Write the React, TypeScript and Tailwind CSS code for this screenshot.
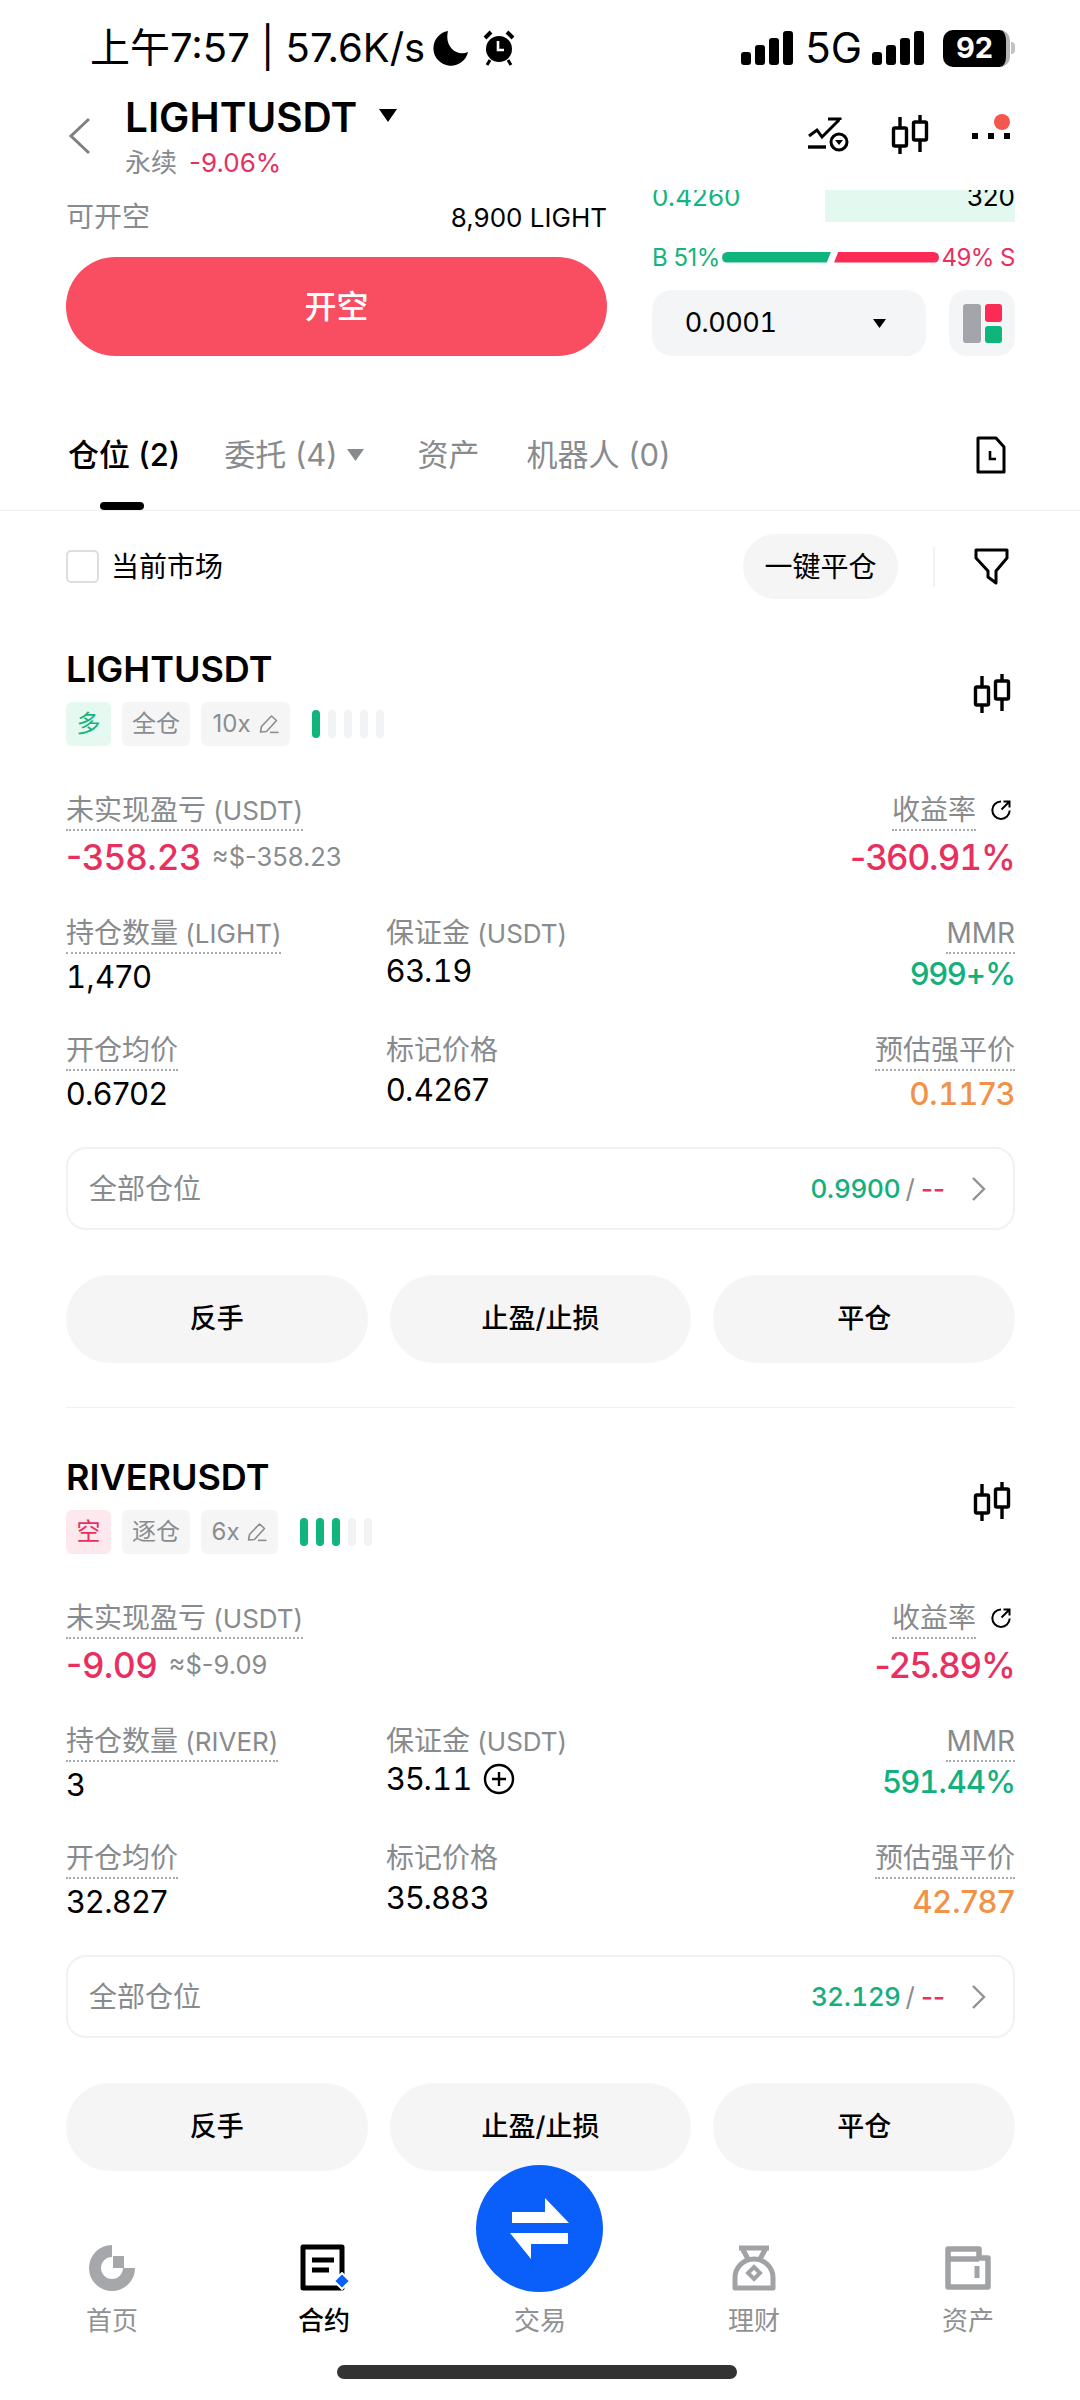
import type { ReactNode } from 'react';

const FONT = '[font-family:Inter,"Noto_Sans_CJK_SC",sans-serif]';

// Inter's proportional 1 is much narrower than the one in the app, the rest of the digits line up
function Num({ v }: { v: string }) {
  return (
    <>
      {v.split(/(1)/).map((part, i) =>
        part === '1' ? (
          <span key={i} className="tabular-nums">
            1
          </span>
        ) : (
          part
        ),
      )}
    </>
  );
}

function SignalBars() {
  return (
    <div className="flex items-end gap-[4px] h-[34px]">
      <div className="w-[10px] h-[13px] rounded-[3px] bg-black" />
      <div className="w-[10px] h-[20px] rounded-[3px] bg-black" />
      <div className="w-[10px] h-[27px] rounded-[3px] bg-black" />
      <div className="w-[10px] h-[34px] rounded-[3px] bg-black" />
    </div>
  );
}

function CandleIcon() {
  return (
    <svg width="38" height="42" viewBox="0 0 38 42" fill="none" stroke="#000" strokeWidth="3.4">
      <path d="M9 3V40M29 1V38" />
      <rect x="2.5" y="14" width="13" height="18" rx="1.5" fill="#fff" />
      <rect x="22.5" y="8" width="13" height="18" rx="1.5" fill="#fff" />
    </svg>
  );
}

function PencilIcon() {
  return (
    <svg width="20" height="20" viewBox="0 0 20 20" fill="none" stroke="#8a8d90" strokeWidth="1.6">
      <path d="M1.5 18L2.5 12.5L12.5 2L17.5 6.5L7.5 17.5L1.5 18Z" strokeLinejoin="round" />
      <path d="M11 18.4H19.5" />
    </svg>
  );
}

function RefreshIcon() {
  return (
    <svg width="22" height="22" viewBox="0 0 22 22" fill="none" stroke="#000" strokeWidth="2">
      <path d="M11 2.5A8.7 8.7 0 1 0 19.7 11.5" />
      <path d="M11.5 10.5L19.5 2.5M13.5 2.5H19.5V8.5" />
    </svg>
  );
}

function PlusCircle() {
  return (
    <svg width="32" height="32" viewBox="0 0 32 32" fill="none" stroke="#000" strokeWidth="2.4">
      <circle cx="16" cy="16" r="14" />
      <path d="M16 9V23M9 16H23" />
    </svg>
  );
}

function Tag({ children, className }: { children: ReactNode; className: string }) {
  return (
    <div className={`h-[44px] rounded-[6px] flex items-center justify-center gap-[8px] text-[24px] ${className}`}>
      {children}
    </div>
  );
}

function Label({ text, unit, dotted = true }: { text: string; unit?: string; dotted?: boolean }) {
  return (
    <div className="h-[38px]">
      <span
        className={`inline-block h-[38px] leading-[34px] text-[28px] text-[#888b8e] ${
          dotted ? 'border-b-2 border-dotted border-[#a8abad]' : ''
        }`}
      >
        {text}
        {unit && <span className="text-[26px]"> {unit}</span>}
      </span>
    </div>
  );
}

interface PositionProps {
  symbol: string;
  side: string;
  long: boolean;
  margin: string;
  leverage: string;
  tagW: string;
  level: number;
  pnl: string;
  pnlUsd: string;
  roe: string;
  base: string;
  qty: string;
  marginVal: string;
  addMargin?: boolean;
  mmr: string;
  entry: string;
  mark: string;
  liq: string;
  tp: string;
}

function Position(p: PositionProps) {
  return (
    <div>
      <div className="flex justify-between items-center">
        <div>
          <div className="h-[40px] leading-[40px] text-[36px] font-semibold text-black">{p.symbol}</div>
          <div className="mt-[13px] flex items-center">
            <Tag className={`w-[45px] ${p.long ? 'bg-[#e5f9f1] text-[#14b47e]' : 'bg-[#fde8ee] text-[#e8305f]'}`}>
              {p.side}
            </Tag>
            <Tag className="ml-[11px] w-[68px] bg-[#f5f5f5] text-[#8a8d90]">{p.margin}</Tag>
            <Tag className={`ml-[11px] ${p.tagW} bg-[#f5f5f5] text-[#8a8d90]`}>
              {p.leverage}
              <PencilIcon />
            </Tag>
            <div className="ml-[22px] flex gap-[8px]">
              {[0, 1, 2, 3, 4].map((i) => (
                <div
                  key={i}
                  className={`w-[8px] h-[28px] rounded-full ${i < p.level ? 'bg-[#0fb57b]' : 'bg-[#f2f3f4]'}`}
                />
              ))}
            </div>
          </div>
        </div>
        <div className="mb-[8px] mr-[4px]">
          <CandleIcon />
        </div>
      </div>

      <div className="mt-[47px] h-[123px] flex justify-between">
        <div>
          <Label text="未实现盈亏" unit="(USDT)" />
          <div className="mt-[6px] flex items-center leading-[40px]">
            <span className="text-[35px] font-medium text-[#e8305f]">{p.pnl}</span>
            <span className="ml-[11px] text-[25.5px] text-[#888b8e]">{p.pnlUsd}</span>
          </div>
        </div>
        <div className="flex flex-col items-end">
          <div className="flex">
            <Label text="收益率" />
            <div className="ml-[14px] mr-[3px] mt-[6px]">
              <RefreshIcon />
            </div>
          </div>
          <div className="mt-[6px] leading-[40px] text-[35px] font-medium tracking-[-0.8px] text-[#e8305f]">
            <Num v={p.roe} />
          </div>
        </div>
      </div>

      <div className="h-[117px] grid grid-cols-[320px_1fr_auto]">
        <div>
          <Label text="持仓数量" unit={`(${p.base})`} />
          <div className="mt-[3px] leading-[40px] text-[31px] text-black">
            <Num v={p.qty} />
          </div>
        </div>
        <div>
          <Label text="保证金" unit="(USDT)" dotted={false} />
          <div className="-mt-[3px] flex items-center gap-[11px] leading-[40px] text-[31px] text-black">
            <span>
              <Num v={p.marginVal} />
            </span>
            {p.addMargin && <PlusCircle />}
          </div>
        </div>
        <div className="flex flex-col items-end">
          <Label text="MMR" />
          <div className="leading-[40px] text-[31px] font-medium tracking-[-1px] text-[#12b07c]">
            <Num v={p.mmr} />
          </div>
        </div>
      </div>

      <div className="h-[114px] grid grid-cols-[320px_1fr_auto]">
        <div>
          <Label text="开仓均价" />
          <div className="mt-[3px] leading-[40px] text-[31px] text-black">{p.entry}</div>
        </div>
        <div>
          <Label text="标记价格" dotted={false} />
          <div className="-mt-[1px] leading-[40px] text-[31px] text-black">{p.mark}</div>
        </div>
        <div className="flex flex-col items-end">
          <Label text="预估强平价" />
          <div className="mt-[3px] leading-[40px] text-[31px] font-medium text-[#f0924a]">
            <Num v={p.liq} />
          </div>
        </div>
      </div>

      <div className="h-[83px] pl-[21px] pr-[22px] flex items-center justify-between rounded-[20px] border-2 border-[#f1f1f1]">
        <span className="mt-[1px] text-[28px] text-[#888b8e]">全部仓位</span>
        <div className="flex items-center text-[26px]">
          <span className="font-medium text-[#12b07c]">
            <Num v={p.tp} />
          </span>
          <span className="ml-[5px] text-[#888b8e]">/</span>
          <span className="ml-[6px] font-medium text-[#e8305f]">--</span>
          <svg className="ml-[26px] mr-[4px]" width="16" height="26" viewBox="0 0 16 26" fill="none" stroke="#8f9193" strokeWidth="2.4">
            <path d="M2 2L13 13L2 24" />
          </svg>
        </div>
      </div>

      <div className="mt-[45px] flex gap-[22px]">
        {['反手', '止盈/止损', '平仓'].map((t) => (
          <div
            key={t}
            className="flex-1 h-[88px] rounded-full bg-[#f5f5f5] flex items-center justify-center text-[27px] font-medium text-black"
          >
            {t}
          </div>
        ))}
      </div>
    </div>
  );
}

const NAV_X: Record<string, number> = { 首页: 112, 合约: 324, 交易: 540, 理财: 754, 资产: 968 };

function NavItem({ icon, label, active }: { icon: ReactNode; label: string; active?: boolean }) {
  return (
    <div className="absolute top-[73px] flex flex-col items-center w-[120px] -translate-x-1/2" style={{ left: NAV_X[label] }}>
      <div className="h-[48px] flex items-center justify-center">{icon}</div>
      <div className={`mt-[12px] text-[26px] leading-[34px] ${active ? 'text-black font-medium' : 'text-[#8f9194]'}`}>
        {label}
      </div>
    </div>
  );
}

export default function App() {
  return (
    <div className={`w-[1080px] h-[2400px] overflow-hidden bg-white ${FONT}`}>
      {/* Status bar */}
      <div className="h-[90px] pl-[90px] pr-[65px] pt-[24px] flex justify-between items-start text-black">
        <div className="flex items-center h-[48px]">
          <span className="text-[40px]">上午7:57 | 57.6K/s</span>
          <svg className="ml-[8px]" width="36" height="36" viewBox="0 0 36 36" fill="#000">
            <path d="M15 1A17.5 17.5 0 1 0 35 22C24 27 11 17 15 1Z" />
          </svg>
          <svg className="ml-[14px]" width="32" height="36" viewBox="0 0 32 36" fill="none">
            <circle cx="16" cy="19" r="13" fill="#000" />
            <path d="M15 11V20H21" stroke="#fff" strokeWidth="2.6" />
            <path d="M2 8L8 2M30 8L24 2" stroke="#000" strokeWidth="4" />
            <path d="M7 30L4 35M25 30L28 35" stroke="#000" strokeWidth="3" />
          </svg>
        </div>
        <div className="flex items-center h-[48px]">
          <SignalBars />
          <span className="ml-[12px] text-[42px] leading-none">5G</span>
          <div className="ml-[10px]">
            <SignalBars />
          </div>
          <div className="ml-[19px] flex items-center">
            <div className="w-[67px] h-[37px] rounded-[10px] bg-black border-r-[4px] border-[#b5b5b5] flex items-center justify-center text-[29px] font-bold text-white">
              92
            </div>
            <div className="ml-[1px] w-[4px] h-[12px] rounded-r-full bg-[#c2c2c2]" />
          </div>
        </div>
      </div>

      {/* Header */}
      <div className="h-[100px] pl-[68px] pr-[65px] flex justify-between">
        <div className="flex">
          <svg className="mt-[27px]" width="24" height="38" viewBox="0 0 24 38" fill="none" stroke="#7e8083" strokeWidth="3">
            <path d="M21 2L3 19L21 36" />
          </svg>
          <div className="ml-[33px] pt-[8px]">
            <div className="flex items-center h-[40px]">
              <span className="text-[40.5px] font-semibold leading-[40px]">LIGHTUSDT</span>
              <svg className="ml-[22px] mb-[6px]" width="18" height="13" viewBox="0 0 18 13" fill="#000">
                <path d="M0 0H18L9 13Z" />
              </svg>
            </div>
            <div className="mt-[8px] h-[34px] leading-[34px] text-[26px]">
              <span className="text-[#888b8e]">永续</span>
              <span className="ml-[12px] text-[#e8305f]">-9.06%</span>
            </div>
          </div>
        </div>
        <div className="relative flex items-start pt-[26px] pr-[5px]">
          <svg width="42" height="36" viewBox="0 0 42 36" fill="none" stroke="#000" strokeWidth="3">
            <path d="M1 20L9 14L14 21L31 4M20 3H32V4" />
            <path d="M0 31H18" strokeWidth="3.4" />
            <circle cx="31" cy="26" r="8" />
            <path d="M27 24H35L31 29Z" fill="#000" stroke="none" />
          </svg>
          <div className="ml-[41px] -mt-[2px]">
            <CandleIcon />
          </div>
          <div className="ml-[43px] mt-[17px] w-[38px] flex justify-between">
            <div className="w-[6px] h-[6px] bg-black" />
            <div className="w-[6px] h-[6px] bg-black" />
            <div className="w-[6px] h-[6px] bg-black" />
          </div>
          <div className="absolute top-[24px] right-[5px] w-[16px] h-[16px] rounded-full bg-[#f4574e]" />
        </div>
      </div>

      {/* Order panel, cut off at the top by the header */}
      <div className="h-[166px] pl-[66px] pr-[65px] flex justify-between">
        <div className="w-[541px]">
          <div className="h-[67px] pb-[13px] flex justify-between items-center">
            <span className="text-[28px] text-[#888b8e]">可开空</span>
            <span className="text-[26px] text-black">8,900 LIGHT</span>
          </div>
          <div className="h-[99px] rounded-full bg-[#f94d62] flex items-center justify-center text-[32px] font-medium text-white">
            开空
          </div>
        </div>
        <div className="w-[363px]">
          <div className="h-[32px] overflow-hidden flex justify-between">
            <span className="-mt-[10px] leading-[34px] text-[26px] text-[#14b47e]">0.4260</span>
            <div className="w-[190px] bg-[#e3f9f0] text-right">
              <div className="-mt-[10px] leading-[34px] text-[26px] text-black">320</div>
            </div>
          </div>
          <div className="mt-[21px] h-[30px] flex items-center justify-between text-[24px] tracking-[-0.5px] whitespace-nowrap">
            <span className="text-[#14b47e]">B 51%</span>
            <div className="flex items-center gap-[3px] -mt-[2px]">
              <div className="w-[109px] h-[11px] rounded-l-full bg-[#0fb57b] [clip-path:polygon(0_0,100%_0,96%_100%,0_100%)]" />
              <div className="w-[105px] h-[11px] rounded-r-full bg-[#fb2b56] [clip-path:polygon(4%_0,100%_0,100%_100%,0_100%)]" />
            </div>
            <span className="text-[#e8305f]">49% S</span>
          </div>
          <div className="mt-[17px] flex justify-between">
            <div className="w-[274px] h-[66px] rounded-[20px] bg-[#f4f5f6] pl-[33px] pr-[40px] flex items-center justify-between">
              <span className="text-[27px] text-black">
                <Num v="0.0001" />
              </span>
              <svg width="13" height="9" viewBox="0 0 13 9" fill="#000">
                <path d="M0 0H13L6.5 9Z" />
              </svg>
            </div>
            <div className="w-[66px] h-[66px] rounded-[18px] bg-[#f4f5f6] flex items-center justify-center gap-[4px]">
              <div className="w-[18px] h-[39px] rounded-[3px] bg-[#a3a5aa]" />
              <div className="flex flex-col gap-[4px]">
                <div className="w-[17px] h-[18px] rounded-[3px] bg-[#fb2b56]" />
                <div className="w-[17px] h-[17px] rounded-[3px] bg-[#0fb57b]" />
              </div>
            </div>
          </div>
        </div>
      </div>

      {/* Tabs */}
      <div className="relative mt-[44px] h-[111px] pl-[68px] pr-[74px] flex items-center justify-between border-b border-[#f0f0f0]">
        <div className="flex items-center text-[31px] text-[#888b8e]">
          <span className="font-medium text-black">仓位 (2)</span>
          <span className="ml-[44px]">委托 (4)</span>
          <svg className="ml-[9px]" width="17" height="12" viewBox="0 0 17 12" fill="#888b8e">
            <path d="M0 0H17L8.5 12Z" />
          </svg>
          <span className="ml-[54px]">资产</span>
          <span className="ml-[47px]">机器人 (0)</span>
        </div>
        <svg width="30" height="38" viewBox="0 0 30 38" fill="none" stroke="#000" strokeWidth="3">
          <path d="M2 2H20L28 11V36H2Z" strokeLinejoin="round" />
          <path d="M14 15V23H20" strokeWidth="2.6" />
        </svg>
        <div className="absolute left-[100px] bottom-0 w-[44px] h-[8px] rounded-full bg-black" />
      </div>

      {/* Filters */}
      <div className="mt-[23px] h-[65px] pl-[66px] pr-[70px] flex items-center justify-between">
        <div className="flex items-center">
          <div className="w-[33px] h-[33px] rounded-[5px] border-2 border-[#dedede]" />
          <span className="ml-[12px] text-[28px] text-black">当前市场</span>
        </div>
        <div className="flex items-center">
          <div className="w-[155px] h-[65px] rounded-full bg-[#f5f5f5] flex items-center justify-center text-[28px] text-black">
            一键平仓
          </div>
          <div className="ml-[35px] w-[2px] h-[40px] bg-[#f3f3f3]" />
          <svg className="ml-[39px]" width="36" height="38" viewBox="0 0 36 38" fill="none" stroke="#000" strokeWidth="3">
            <path d="M2 2H33V10L22 23V35L14 29V23L2 10Z" strokeLinejoin="round" />
          </svg>
        </div>
      </div>

      {/* Positions */}
      <div className="mt-[50px] pl-[66px] pr-[65px]">
        <Position
          symbol="LIGHTUSDT"
          side="多"
          long
          margin="全仓"
          leverage="10x"
          tagW="w-[89px]"
          level={1}
          pnl="-358.23"
          pnlUsd="≈$-358.23"
          roe="-360.91%"
          base="LIGHT"
          qty="1,470"
          marginVal="63.19"
          mmr="999+%"
          entry="0.6702"
          mark="0.4267"
          liq="0.1173"
          tp="0.9900"
        />
        <div className="mt-[44px] mb-[49px] h-px bg-[#f0f0f0]" />
        <Position
          symbol="RIVERUSDT"
          side="空"
          long={false}
          margin="逐仓"
          leverage="6x"
          tagW="w-[77px]"
          level={3}
          pnl="-9.09"
          pnlUsd="≈$-9.09"
          roe="-25.89%"
          base="RIVER"
          qty="3"
          marginVal="35.11"
          addMargin
          mmr="591.44%"
          entry="32.827"
          mark="35.883"
          liq="42.787"
          tp="32.129"
        />
      </div>

      {/* Bottom nav */}
      <div className="relative h-[228px] bg-white">
        <NavItem
          label="首页"
          icon={
            <svg width="46" height="46" viewBox="0 0 46 46" fill="none">
              <path d="M23 6A17 17 0 1 0 40 23" stroke="#a5a7aa" strokeWidth="12" />
              <rect x="24" y="11" width="11" height="12" fill="#a5a7aa" />
            </svg>
          }
        />
        <NavItem
          label="合约"
          active
          icon={
            <svg width="52" height="48" viewBox="0 0 52 48" fill="none">
              <path d="M5 3H44V44H5Z" stroke="#000" strokeWidth="5" strokeLinejoin="round" />
              <path d="M14 16H36M14 26H31" stroke="#000" strokeWidth="5" />
              <path d="M44 29L52 37L44 45L36 37Z" fill="#0a5ffb" stroke="#fff" strokeWidth="2" strokeLinejoin="round" />
            </svg>
          }
        />
        <NavItem label="交易" icon={<div className="w-[48px]" />} />
        <NavItem
          label="理财"
          icon={
            <svg width="44" height="46" viewBox="0 0 44 46" fill="none" stroke="#a0a2a5" strokeWidth="5">
              <path d="M7 3H37M10 3L16 14M34 3L28 14" />
              <path d="M3 43V33A19 19 0 0 1 41 33V43Z" strokeLinejoin="round" />
              <path d="M22 22L28 28L22 34L16 28Z" strokeWidth="4" />
            </svg>
          }
        />
        <NavItem
          label="资产"
          icon={
            <svg width="46" height="44" viewBox="0 0 46 44" fill="none" stroke="#a0a2a5" strokeWidth="5.5">
              <path d="M3 41V3H34V12H43V41Z" strokeLinejoin="round" />
              <path d="M3 13H34" />
              <path d="M32 20V32" strokeWidth="5" />
            </svg>
          }
        />
        {/* Trade button sits over the action row */}
        <div className="absolute left-[476px] -top-[6px] w-[127px] h-[127px] rounded-full bg-[#0a5ffb] flex items-center justify-center">
          <svg width="62" height="64" viewBox="0 0 62 64" fill="#fff">
            <path d="M3 15H36V1L60 26H3Z" />
            <path d="M1 36H59V47H22V62Z" />
          </svg>
        </div>
        <div className="absolute left-[337px] top-[194px] w-[400px] h-[14px] rounded-full bg-[#333]" />
      </div>
    </div>
  );
}
